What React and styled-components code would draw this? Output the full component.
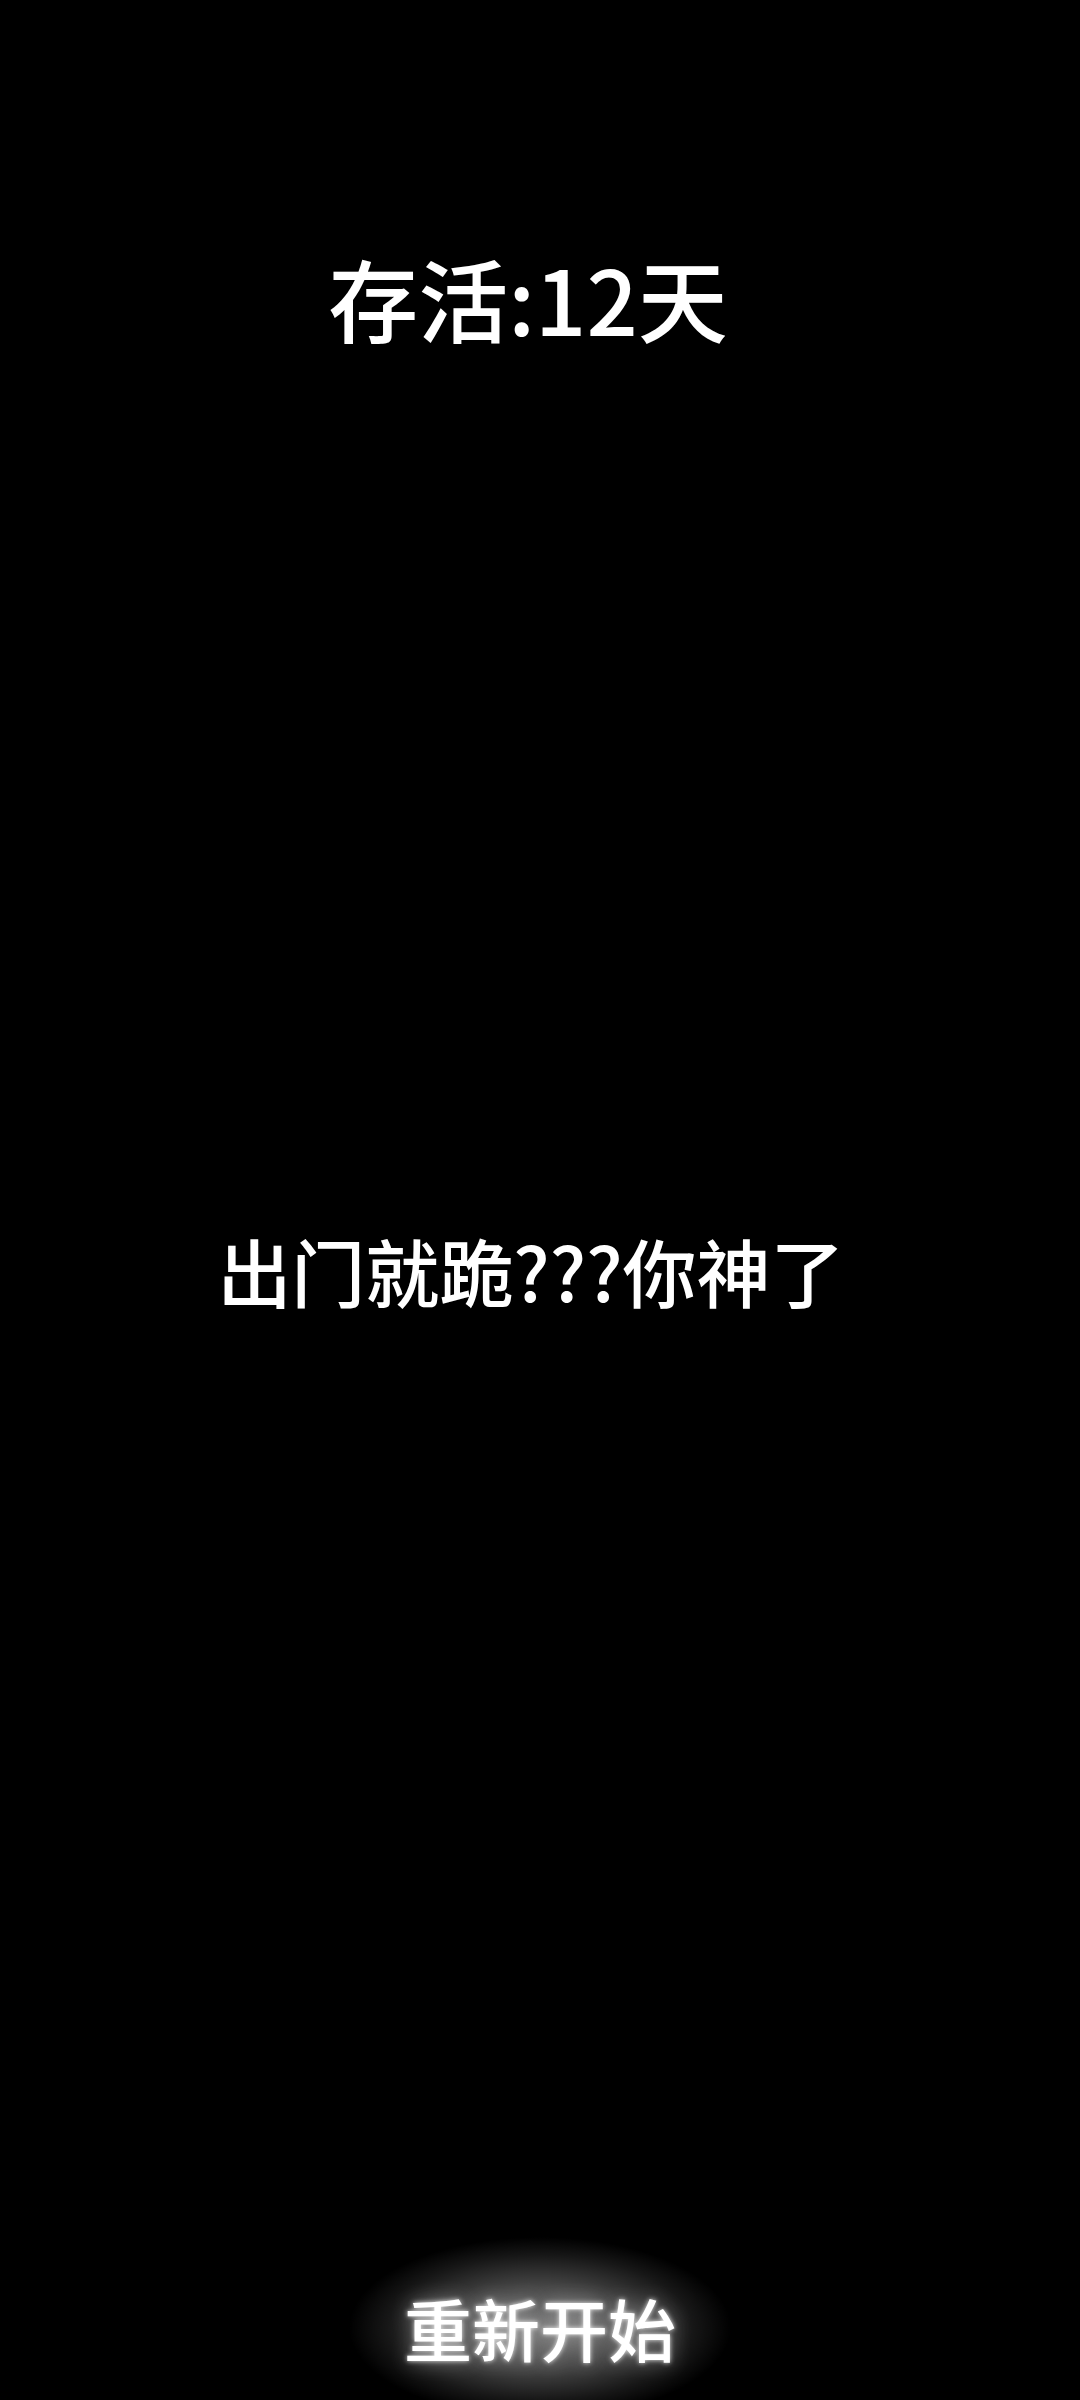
import React from "react";
import styled, { createGlobalStyle } from "styled-components";

const GlobalStyle = createGlobalStyle`
  html, body {
    margin: 0;
    padding: 0;
    background: #000;
  }
  body {
    font-family: "Noto Sans CJK SC", "Noto Sans", sans-serif;
  }
`;

const Screen = styled.div`
  min-height: 100vh;
  background: #000;
  color: #fff;
  display: flex;
  flex-direction: column;
  align-items: center;
`;

// both texts sit a touch left of centre in the reference
const DaysTitle = styled.h1`
  margin: 243px 0 0;
  padding-right: 24px;
  font-size: 90px;
  font-weight: 500;
  line-height: 1.2;
  text-align: center;
`;

const Message = styled.p`
  margin: 875px 0 0;
  padding-right: 18px;
  font-size: 74px;
  font-weight: 500;
  line-height: 1.2;
  text-align: center;
`;

const RestartButton = styled.button`
  margin-top: 922px;
  padding: 50px 55px;
  border: none;
  background: radial-gradient(
    closest-side,
    rgba(255, 255, 255, 0.45) 0%,
    rgba(255, 255, 255, 0.28) 45%,
    rgba(255, 255, 255, 0.09) 80%,
    rgba(0, 0, 0, 0) 100%
  );
  color: #fff;
  font-family: inherit;
  font-size: 68px;
  font-weight: 500;
  line-height: 1.2;
  cursor: pointer;
  text-shadow: 0 0 5px rgba(255, 255, 255, 0.9), 0 0 20px rgba(255, 255, 255, 0.45);
`;

const App = () => {
  const days = 12;

  return (
    <Screen>
      <GlobalStyle />
      <DaysTitle>存活:{days}天</DaysTitle>
      <Message>出门就跪???你神了</Message>
      <RestartButton>重新开始</RestartButton>
    </Screen>
  );
};

export default App;
